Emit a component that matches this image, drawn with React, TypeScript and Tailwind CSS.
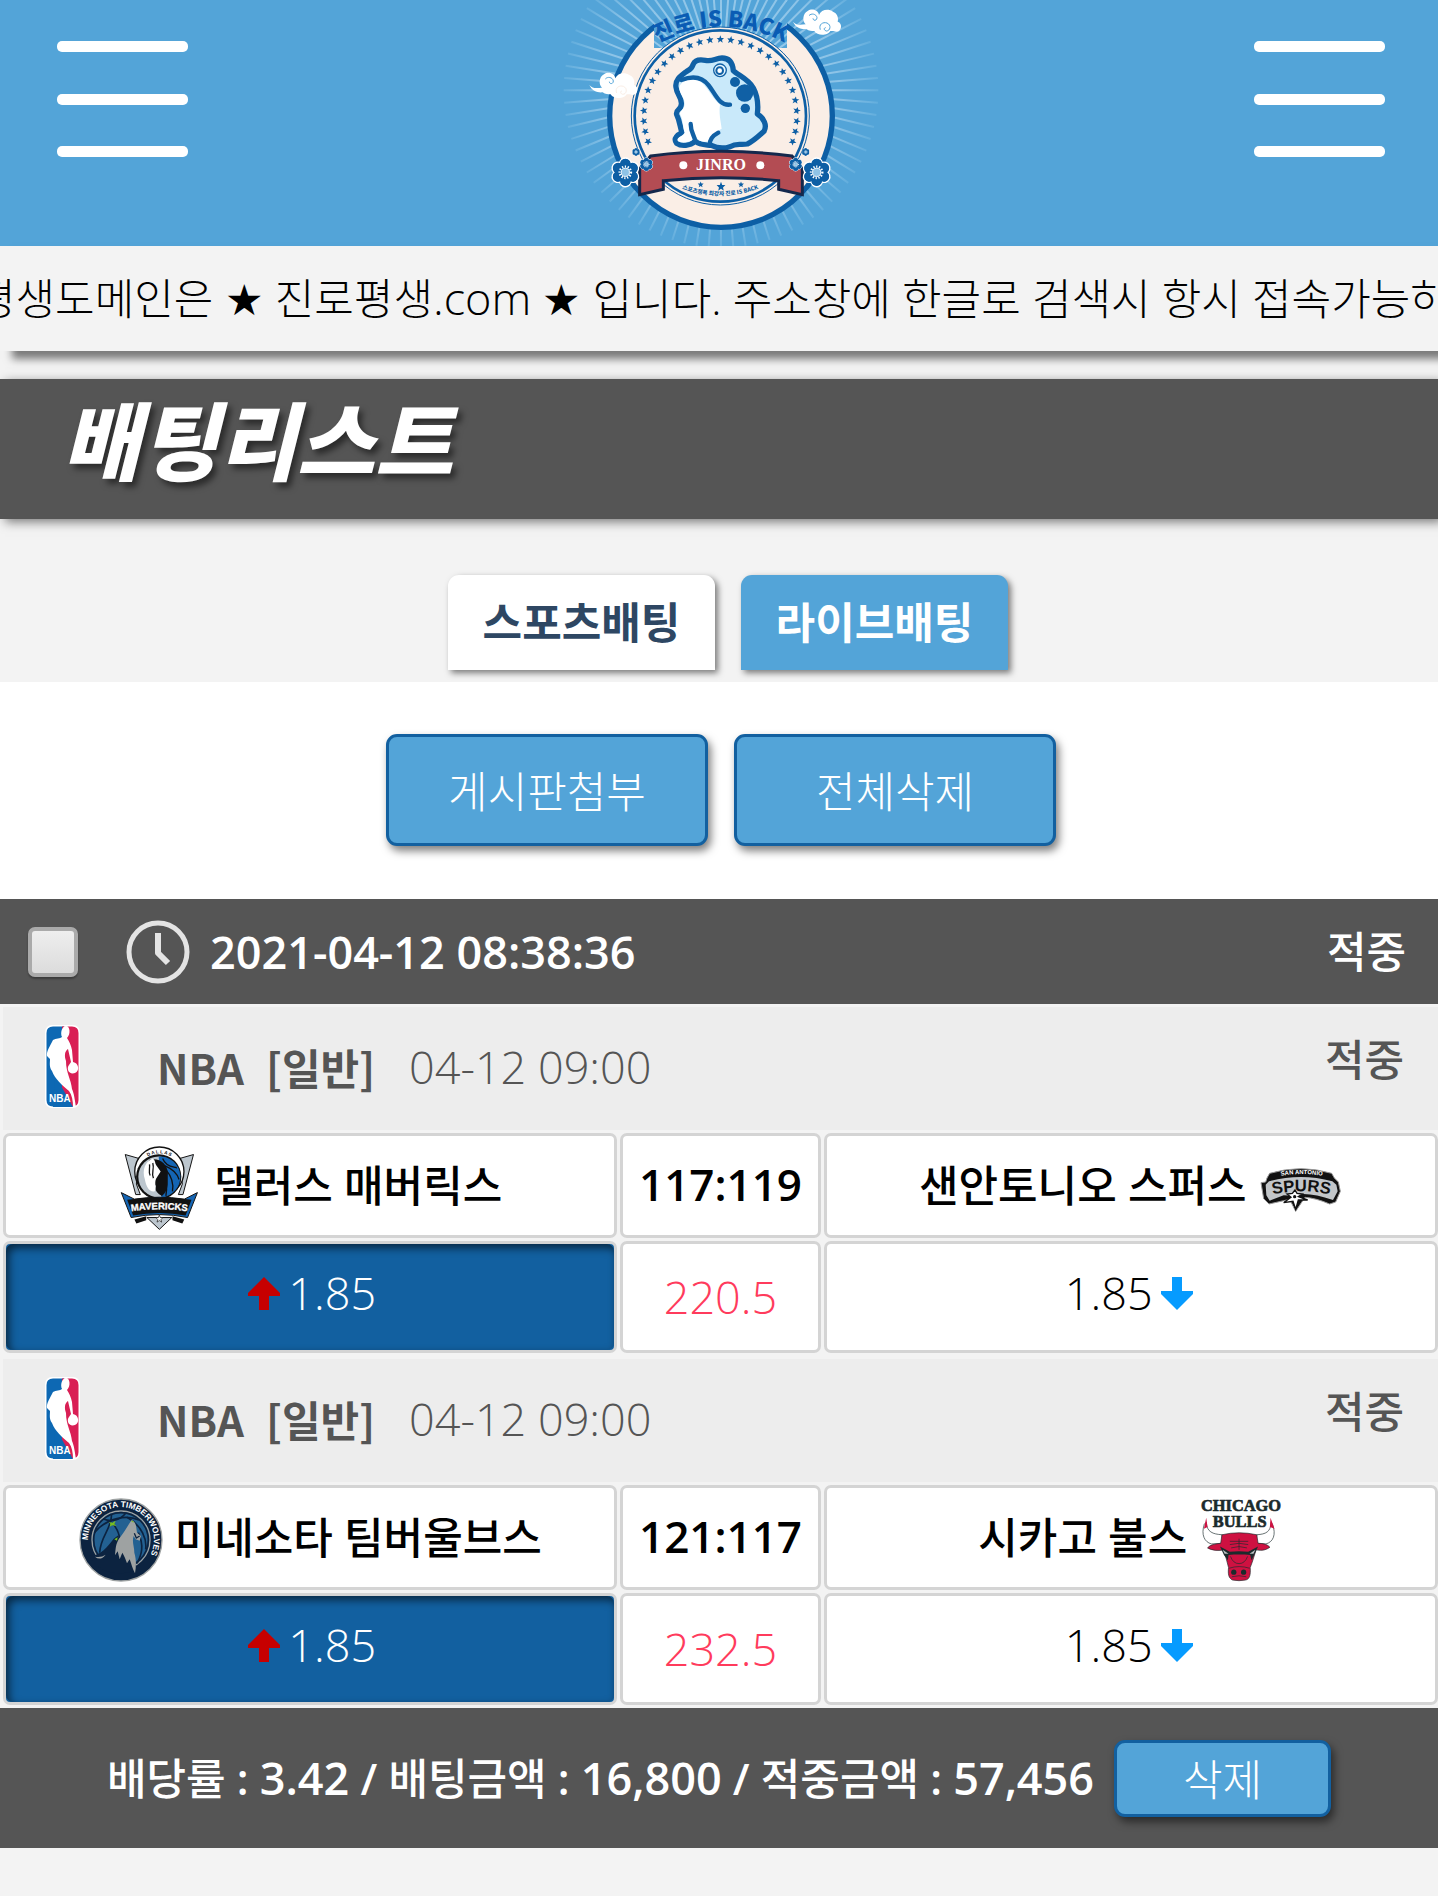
import type { ReactNode } from 'react';
import clsx from 'clsx';

interface Team {
  name: string;
  logo: ReactNode;
}

interface Match {
  id: number;
  league: string;
  type: string;
  time: string;
  status: string;
  home: Team;
  away: Team;
  score: string;
  homeOdds: string;
  line: string;
  awayOdds: string;
}

const STAR = 'M0 -12 L3 -4 L11 -4 L5 2 L7 10 L0 5 L-7 10 L-5 2 L-11 -4 L-3 -4 Z';
const RAYS = Array.from({ length: 80 }, (_, i) => i * 4.5);
const RING_STARS = Array.from({ length: 29 }, (_, i) => (i - 14) * 7.82);
const PETALS = [0, 60, 120, 180, 240, 300];

function Rays() {
  return (
    <g stroke="url(#ray)" strokeWidth="6">
      {RAYS.map((a) => (
        <line key={a} x1="543" y1="271" x2="1015" y2="271.1" transform={`rotate(${a} 543 271)`} />
      ))}
    </g>
  );
}

function Flower({ x, y, size }: { x: number; y: number; size: number }) {
  return (
    <g transform={`translate(${x} ${y}) scale(${size})`}>
      {PETALS.map((a) => (
        <circle key={a} cy="-27" r="18" fill="#0d5fa5" stroke="#fff" strokeWidth="5" transform={`rotate(${a})`} />
      ))}
      {PETALS.map((a) => (
        <circle key={a} cy="-26" r="17" fill="#0d5fa5" transform={`rotate(${a})`} />
      ))}
      <circle r="24" fill="#0d5fa5" />
      <circle r="18" fill="none" stroke="#fff" strokeWidth="7" strokeDasharray="4 5" />
      <circle r="13" fill="#8fc3e6" stroke="#fff" strokeWidth="3" />
    </g>
  );
}

function Cloud({ x, y, swirl }: { x: number; y: number; swirl: string }) {
  return (
    <g transform={`translate(${x} ${y})`}>
      <path
        d="M0 38 C12 52 26 46 38 46 C28 38 28 14 44 6 C58 -4 76 4 78 18 C84 2 106 -2 120 8 C132 12 138 26 134 38 C150 42 146 68 130 68 C122 66 118 66 112 66 C106 80 72 82 64 66 C56 66 48 66 40 60 C26 62 8 56 0 38 Z"
        fill="#fff"
      />
      <path d="M48 20 C54 12 70 14 72 26 C72 36 60 36 60 28" fill="none" stroke="#53a4d8" strokeWidth="3" />
      <path d="M82 62 C76 46 90 38 102 42 C116 48 112 66 100 66 C92 64 92 56 98 56" fill="none" stroke={swirl} strokeWidth="3" />
    </g>
  );
}

function BrandLogo() {
  return (
    <svg viewBox="3 0 1080 738" className="h-[246px] w-[360px]" role="img" aria-label="진로 IS BACK">
      <defs>
        <radialGradient id="ray" gradientUnits="userSpaceOnUse" cx="543" cy="271" r="472">
          <stop offset="0" stopColor="#a5d0ec" />
          <stop offset="0.75" stopColor="#8cc3e7" />
          <stop offset="1" stopColor="#63aedd" />
        </radialGradient>
        <path id="top-arc" d="M356 126 Q543 34 730 126" />
        <path id="bottom-arc" d="M410 560 Q540 614 672 560" />
        <clipPath id="plate">
          <rect x="342" y="0" width="399" height="144" />
        </clipPath>
      </defs>
      <Rays />
      <circle cx="543" cy="348" r="334" fill="#faeee6" stroke="#0d5fa5" strokeWidth="16" />
      <g clipPath="url(#plate)">
        <rect x="342" y="0" width="399" height="144" fill="#53a4d8" />
        <Rays />
      </g>
      <circle cx="541" cy="348" r="267" fill="#faeee6" stroke="#0d5fa5" strokeWidth="3" />
      <circle cx="541" cy="348" r="257" fill="none" stroke="#0d5fa5" strokeWidth="8" />
      <text className="font-['Noto_Sans_CJK_KR',sans-serif] text-[66px] font-black" fill="#0a5cb4">
        <textPath href="#top-arc" startOffset="50%" textAnchor="middle">진로 IS BACK</textPath>
      </text>
      {RING_STARS.map((a) => (
        <path key={a} d={STAR} fill="#0d5fa5" transform={`rotate(${a} 541 348) translate(541 118)`} />
      ))}

      {/* toad */}
      <path
        d="M460 192 C466 178 480 178 496 181 C518 186 526 174 546 174 C568 174 578 190 580 212 C594 226 624 236 640 264 C654 290 655 318 652 342 C672 354 682 376 672 394 C654 410 640 424 622 432 C600 436 590 428 570 440 C552 446 530 444 514 436 C494 434 480 436 466 424 C450 438 424 440 410 430 C398 414 414 404 426 398 C420 382 420 364 410 344 C406 326 424 332 424 312 C426 292 410 284 408 262 C404 238 424 226 440 214 C454 206 456 202 460 192 Z"
        fill="#c9e9fa"
        stroke="#1060a5"
        strokeWidth="16"
        strokeLinejoin="round"
      />
      <path
        d="M418 262 C424 236 466 232 486 248 C508 270 520 298 540 314 C536 340 542 360 545 386 C526 396 510 410 506 424 C490 428 476 424 468 410 C458 424 432 432 414 424 C406 412 428 410 434 398 C428 380 430 360 420 342 C418 334 434 328 434 312 C434 292 418 284 418 262 Z"
        fill="#fff"
      />
      <g fill="none" stroke="#1060a5" strokeWidth="13" strokeLinecap="round">
        <path d="M424 240 C460 226 486 230 506 256 C528 284 538 318 570 314" />
        <path d="M452 372 C452 396 462 404 466 424" />
        <path d="M535 398 C520 406 508 416 510 434" />
      </g>
      <circle cx="540" cy="211" r="19" fill="#e6f5fd" stroke="#1060a5" strokeWidth="4" />
      <circle cx="539" cy="212" r="10" fill="#fff" stroke="#1060a5" strokeWidth="6" />
      <circle cx="585" cy="246" r="15" fill="#1060a5" />
      <circle cx="614" cy="279" r="26" fill="#1060a5" />
      <circle cx="616" cy="325" r="14" fill="#1060a5" />

      {/* ribbon */}
      <path
        d="M299 506 L332 468 Q543 440 756 468 L787 506 V584 L716 568 V542 Q543 524 370 542 V568 L299 584 Z"
        fill="#b34c53"
        stroke="#14284c"
        strokeWidth="9"
      />
      <text x="543" y="511" textAnchor="middle" className="font-['Liberation_Serif',serif] text-[48px] font-bold" fill="#fff">
        JINRO
      </text>
      <circle cx="430" cy="496" r="12" fill="#fff" />
      <circle cx="661" cy="496" r="12" fill="#fff" />
      <path d={STAR} fill="#0d5fa5" transform="translate(482 554) scale(.8)" />
      <path d={STAR} fill="#0d5fa5" transform="translate(543 560) scale(1.2)" />
      <path d={STAR} fill="#0d5fa5" transform="translate(603 554) scale(.8)" />
      <text className="font-['Noto_Sans_CJK_KR',sans-serif] text-[17px] font-black" fill="#0d5fa5">
        <textPath href="#bottom-arc" startOffset="50%" textAnchor="middle">스포츠정복 최강자 진로 IS BACK</textPath>
      </text>

      <Flower x={288} y={456} size={0.26} />
      <Flower x={797} y={456} size={0.26} />
      <Flower x={256} y={517} size={0.95} />
      <Flower x={830} y={517} size={0.95} />
      <Flower x={319} y={493} size={0.45} />
      <Flower x={767} y={493} size={0.45} />
      <Cloud x={759} y={27} swirl="#53a4d8" />
      <Cloud x={148} y={217} swirl="#faeee6" />
    </svg>
  );
}

function MenuButton({ label }: { label: string }) {
  return (
    <button type="button" aria-label={label} className="mt-10">
      <svg viewBox="0 0 131 118" className="h-[118px] w-[131px]" fill="#fff">
        <rect y="1" width="131" height="11" rx="5" />
        <rect y="54" width="131" height="11" rx="5" />
        <rect y="106" width="131" height="11" rx="5" />
      </svg>
    </button>
  );
}

function ClockIcon() {
  return (
    <svg viewBox="0 0 64 64" className="size-16" fill="none" stroke="#e4e4e4">
      <circle cx="32" cy="32" r="29" strokeWidth="5" />
      <path d="M32 13 V33 L42 43" strokeWidth="6" strokeLinejoin="round" />
    </svg>
  );
}

function NbaLogo() {
  return (
    <svg viewBox="0 0 35 83" className="h-[83px] w-[35px]" role="img" aria-label="NBA">
      <rect width="35" height="83" rx="7" fill="#fff" />
      <path d="M8 1.500 H19 V81.500 H8 Q1.500 81.500 1.500 75 V8 Q1.500 1.500 8 1.500 Z" fill="#0d68b3" />
      <path d="M17 1.500 H27 Q33.500 1.500 33.500 8 V75 Q33.500 81.500 27 81.500 H17 Z" fill="#d91f55" />
      <path d="M10 50 L28 82 H8 Z" fill="#0d68b3" />
      <path
        d="M17 12 C15 8 17 1 21 1 C25 1 26 9 22 13 C24 16 26 20 27 25 L28 37 C34 38 35 46 30 48 C24 50 21 44 24 40 L26 37 L23 24 C20 26 19 30 21 36 C21 48 26 54 27 64 C29 68 30 76 31 82 H28 C28 76 27 70 24 66 C17 60 10 54 7 46 C4 42 5 38 5 34 L2 31 C1 27 5 21 8 15 C11 13 15 14 17 12 Z"
        fill="#fff"
      />
      <text x="4" y="77" className="font-['Liberation_Sans_Narrow','Liberation_Sans',sans-serif] text-[10px] font-bold" fill="#fff">
        NBA
      </text>
    </svg>
  );
}

function MavericksLogo() {
  return (
    <svg viewBox="26 14 256 256" className="size-21" role="img" aria-label="Dallas Mavericks">
      <path d="M48 40 L90 52 L82 130 L94 162 L80 162 Z" fill="#bcc6ce" stroke="#111" strokeWidth="3" />
      <path d="M256 40 L214 52 L222 130 L210 162 L224 162 Z" fill="#bcc6ce" stroke="#111" strokeWidth="3" />
      <path d="M114 232 L190 232 L152 268 Z" fill="#bcc6ce" stroke="#111" strokeWidth="3" />
      <circle cx="152" cy="92" r="75" fill="#fff" stroke="#111" strokeWidth="4" />
      <circle cx="150" cy="108" r="69" fill="#111" />
      <circle cx="150" cy="108" r="62" fill="#bcc6ce" />
      <path d="M150 46 A62 62 0 0 1 158 170 Z" fill="#1465b4" />
      <g fill="none" stroke="#111" strokeWidth="4">
        <path d="M162 52 C176 86 206 74 204 82" />
        <path d="M168 74 C196 86 208 102 212 116" />
        <path d="M172 86 C192 110 196 130 192 152" />
        <path d="M168 96 C176 120 176 140 172 166" />
      </g>
      <path d="M122 56 C150 48 176 66 178 96 C176 120 184 146 160 166 C146 158 136 148 142 134 C120 138 98 100 122 56 Z" fill="#111" />
      <path d="M132 52 C110 60 98 86 108 116 C112 138 122 156 138 152 C144 138 136 128 142 114 L156 92 L142 72 C138 64 140 58 132 52 Z" fill="#fff" />
      <path d="M122 70 C124 82 118 94 124 104 M132 66 C138 86 126 96 134 112" fill="none" stroke="#111" strokeWidth="4" />
      <path d="M76 238 L112 228 L112 240 L82 250 Z M228 238 L192 228 L192 240 L222 250 Z" fill="#111" />
      <path d="M36 156 L76 176 Q152 164 228 176 L268 156 L238 232 Q152 214 66 232 Z" fill="#1465b4" stroke="#111" strokeWidth="3" />
      <path d="M54 178 Q152 164 250 178 L232 226 Q152 210 72 226 Z" fill="#111" />
      <path id="mavs" d="M62 214 Q152 200 242 214" fill="none" />
      <text className="font-['Liberation_Sans_Narrow','Liberation_Sans',sans-serif] text-[29px] font-bold" fill="#fff" stroke="#fff" strokeWidth="1">
        <textPath href="#mavs" startOffset="50%" textAnchor="middle">MAVERICKS</textPath>
      </text>
      <path id="dallas" d="M92 66 Q152 6 212 66" fill="none" />
      <text className="font-['Liberation_Sans',sans-serif] text-[14px] font-bold" fill="#111">
        <textPath href="#dallas" startOffset="50%" textAnchor="middle">D A L L A S</textPath>
      </text>
      <path d={STAR} fill="#fff" stroke="#111" strokeWidth="2" transform="translate(152 236)" />
    </svg>
  );
}

function SpursLogo() {
  return (
    <svg viewBox="30 16 252 252" className="size-21" role="img" aria-label="San Antonio Spurs">
      <path
        d="M54 112 L62 98 Q156 70 248 98 L256 112 L268 124 L274 152 L260 184 L242 190 Q200 172 168 170 L140 212 L122 176 L104 180 L60 190 L44 174 L36 126 L50 124 Z"
        fill="#111"
        stroke="#999"
        strokeWidth="3"
      />
      <path d="M50 132 L60 122 Q156 96 250 122 L262 132 L266 152 L252 178 Q196 158 156 160 L144 166 L104 164 L62 180 L52 164 Z" fill="#c2c6c9" />
      <path id="san" d="M66 112 Q156 88 250 112" fill="none" />
      <text className="font-['Liberation_Sans',sans-serif] text-[18px] font-bold" fill="#fff">
        <textPath href="#san" startOffset="50%" textAnchor="middle">SAN ANTONIO</textPath>
      </text>
      <path id="spurs" d="M60 164 Q156 140 254 164" fill="none" />
      <text className="font-['Liberation_Sans',sans-serif] text-[50px] font-bold" fill="#111">
        <textPath href="#spurs" startOffset="50%" textAnchor="middle">SPURS</textPath>
      </text>
      <path d="M138 148 L144 158 L160 160 L148 168 L176 178 L148 178 L140 206 L132 182 L104 186 L126 170 L114 160 L130 158 Z" fill="#fff" stroke="#111" strokeWidth="4" />
      <circle cx="137" cy="168" r="5" fill="#111" />
    </svg>
  );
}

function TimberwolvesLogo() {
  return (
    <svg viewBox="26 26 252 252" className="size-21" role="img" aria-label="Minnesota Timberwolves">
      <circle cx="152" cy="152" r="123" fill="#0c2340" stroke="#9ea2a2" strokeWidth="4" />
      <circle cx="152" cy="152" r="87" fill="#236192" stroke="#9ea2a2" strokeWidth="4" />
      <g fill="none" stroke="#0c2340" strokeWidth="5">
        <circle cx="152" cy="152" r="82" />
        <path d="M72 130 C110 84 170 76 206 92" />
        <path d="M98 88 C124 100 150 92 166 72" />
        <path d="M124 74 C124 120 90 140 88 190" />
        <path d="M126 100 C150 130 150 150 146 170" />
        <path d="M170 84 C216 110 230 150 226 180" />
        <path d="M204 130 C222 170 214 196 200 222" />
      </g>
      <path d="M116 98 L126 100 L136 94 L132 104 L138 110 L126 108 L118 112 L120 104 Z" fill="#78be21" />
      <path d="M56 200 C90 200 112 172 130 148 L144 138 L150 170 L190 200 L200 240 C156 262 86 256 56 200 Z" fill="#0c2340" />
      <path
        d="M184 92 C190 94 198 104 198 116 L200 130 L212 140 L208 154 L196 150 L190 140 C184 156 192 172 192 190 C198 210 198 230 194 252 C186 238 184 226 178 210 L170 222 C166 210 162 200 156 190 L148 210 L142 186 L134 198 C136 178 136 164 146 148 C160 132 170 112 184 92 Z"
        fill="#9ea2a2"
      />
      <path d="M192 132 L198 146 L208 140" fill="none" stroke="#0c2340" strokeWidth="4" />
      <path d="M132 150 L142 144 L140 154 Z M182 96 L188 94 L190 100 Z" fill="#78be21" />
      <path d="M74 202 Q92 206 106 196 Q90 216 74 202 Z" fill="#9ea2a2" />
      <path id="wolves" d="M58 184 A99 99 0 1 1 222 222" fill="none" />
      <text className="font-['Liberation_Sans',sans-serif] text-[25px] font-bold" fill="#fff">
        <textPath href="#wolves" startOffset="50%" textAnchor="middle">MINNESOTA TIMBERWOLVES</textPath>
      </text>
    </svg>
  );
}

function BullsLogo() {
  return (
    <svg viewBox="28 56 256 256" className="size-21" role="img" aria-label="Chicago Bulls">
      <g textAnchor="middle" fill="#1c2a2c" stroke="#1c2a2c" strokeWidth="2" className="font-['Liberation_Serif',serif] text-[50px] font-bold">
        <text x="156" y="95">CHICAGO</text>
        <text x="152" y="145">BULLS</text>
      </g>
      <path d="M44 136 C34 168 44 190 66 196 L100 194 L98 168 C70 166 52 160 50 130 Z" fill="#fff" stroke="#1c2a2c" strokeWidth="2" />
      <path d="M252 136 C264 168 254 190 232 196 L202 194 L204 168 C232 166 246 160 248 130 Z" fill="#fff" stroke="#1c2a2c" strokeWidth="2" />
      <path d="M50 116 L54 144 L43 150 Z M246 116 L258 150 L244 144 Z" fill="#ce1141" />
      <path d="M98 168 Q150 156 204 168 L208 194 C224 194 238 198 244 206 C228 218 212 216 202 214 L190 252 L184 268 C186 290 182 304 170 306 Q150 310 130 306 C118 300 116 288 118 268 L104 214 C90 218 66 216 54 208 C62 198 78 196 94 194 Z" fill="#ce1141" stroke="#1c2a2c" strokeWidth="2" />
      <path d="M92 204 L122 220 L150 218 L178 220 L208 204 L196 230 L188 246 L184 230 L168 228 L134 228 L118 230 L116 246 L104 230 Z" fill="#1c2a2c" />
      <path d="M100 214 L118 226 L106 226 Z M200 214 L182 226 L194 226 Z" fill="#b8bec0" />
      <path d="M122 188 H178 M122 198 Q150 190 178 198 M126 208 Q150 200 174 208 M150 180 V214 M124 234 Q132 256 150 256 Q168 256 176 234 M120 270 Q150 260 182 270 M128 296 Q150 290 172 296" fill="none" stroke="#1c2a2c" strokeWidth="2" />
      <circle cx="134" cy="282" r="8" fill="#1c2a2c" />
      <circle cx="164" cy="282" r="8" fill="#1c2a2c" />
    </svg>
  );
}

const matches: Match[] = [
  {
    id: 1,
    league: 'NBA',
    type: '일반',
    time: '04-12 09:00',
    status: '적중',
    home: { name: '댈러스 매버릭스', logo: <MavericksLogo /> },
    away: { name: '샌안토니오 스퍼스', logo: <SpursLogo /> },
    score: '117:119',
    homeOdds: '1.85',
    line: '220.5',
    awayOdds: '1.85',
  },
  {
    id: 2,
    league: 'NBA',
    type: '일반',
    time: '04-12 09:00',
    status: '적중',
    home: { name: '미네소타 팀버울브스', logo: <TimberwolvesLogo /> },
    away: { name: '시카고 불스', logo: <BullsLogo /> },
    score: '121:117',
    homeOdds: '1.85',
    line: '232.5',
    awayOdds: '1.85',
  },
];

const NUM = 'text-[45px]';
const KR = "font-['Noto_Sans_CJK_KR',sans-serif] text-[42px] font-bold";
const CELL = 'rounded-[7px] border-[3px] border-[#d4d4d4] text-center';
const ACTION =
  'rounded-[11px] border-[3px] border-[#1260a0] bg-[#53a4d8] pt-1 font-light text-white shadow-[3px_5px_8px_rgba(0,0,0,0.5)]';

function MatchTable({ match }: { match: Match }) {
  return (
    <div className="overflow-hidden">
      <table className="w-[calc(100%+3px)] table-fixed border-separate border-spacing-[3px]">
        <colgroup>
          <col className="w-[43%]" />
          <col className="w-[14%]" />
          <col className="w-[43%]" />
        </colgroup>
        <tbody>
          <tr className="h-[123px]">
            <th colSpan={3} className="bg-[#ededed] pr-[34px] pb-1 pl-[42px] text-left font-normal text-[#555]">
              <div className="flex items-center">
                <NbaLogo />
                <span className={clsx(KR, 'ml-[77px]')}>{match.league}</span>
                <span className={clsx(KR, 'ml-[22px]')}>[{match.type}]</span>
                <span className={clsx(NUM, 'ml-[34px] font-light')}>{match.time}</span>
                <span className="mb-3.5 ml-auto font-medium">{match.status}</span>
              </div>
            </th>
          </tr>
          <tr className="h-[105px] font-medium">
            <td className={clsx(CELL, 'bg-white pt-1')}>
              <div className="flex items-center justify-center gap-3">
                {match.home.logo}
                <span className="pb-1">{match.home.name}</span>
              </div>
            </td>
            <td className={clsx(CELL, 'bg-white pb-1 text-[44px] font-semibold')}>{match.score}</td>
            <td className={clsx(CELL, 'bg-white pt-1')}>
              <div className="flex items-center justify-center gap-3">
                <span className="pb-1">{match.away.name}</span>
                {match.away.logo}
              </div>
            </td>
          </tr>
          <tr className="h-28 font-light">
            <td className={clsx(CELL, NUM, 'bg-[#1260a0] pb-2 pl-1 text-white shadow-[inset_3px_4px_8px_rgba(0,0,0,0.6)]')}>
              <div className="flex items-center justify-center gap-2">
                <svg viewBox="0 0 32 33" className="h-[33px] w-8" fill="#c70000">
                  <path d="M16 0 L32 16 V19 H21 V33 H11 V19 H0 V16 Z" />
                </svg>
                {match.homeOdds}
              </div>
            </td>
            <td className={clsx(CELL, NUM, 'bg-white text-[#ff3b5c]')}>{match.line}</td>
            <td className={clsx(CELL, NUM, 'bg-white pr-1 pb-2')}>
              <div className="flex items-center justify-center gap-2">
                {match.awayOdds}
                <svg viewBox="0 0 32 33" className="h-[33px] w-8" fill="#069bff">
                  <path d="M16 33 L32 17 V14 H21 V0 H11 V14 H0 V17 Z" />
                </svg>
              </div>
            </td>
          </tr>
        </tbody>
      </table>
    </div>
  );
}

export default function App() {
  return (
    <div className="min-h-screen bg-[#f3f3f3] font-['Open_Sans','Noto_Sans_CJK_KR',sans-serif] text-[43px] leading-[60px] text-black">
      <header className="flex items-start justify-between bg-[#53a4d8] pr-[53px] pl-[57px]">
        <MenuButton label="메뉴" />
        <BrandLogo />
        <MenuButton label="내 정보" />
      </header>

      <div className="bg-[#f3f3f3] shadow-[12px_8px_8px_rgba(0,0,0,0.5)]">
        <div className="h-[105px] overflow-hidden">
          <p className="-ml-6 leading-[104px] font-light whitespace-nowrap">
            평생도메인은 <span className="font-['DejaVu_Sans',sans-serif]">★</span> 진로평생
            <span className={NUM}>.com</span> <span className="font-['DejaVu_Sans',sans-serif]">★</span> 입니다.
            주소창에 한글로 검색시 항시 접속가능하
          </p>
        </div>
      </div>

      <h1 className="mt-7 bg-[#555] pb-4 pl-[62px] text-[85px] leading-[124px] font-black text-white italic shadow-[5px_3px_10px_rgba(0,0,0,0.5)] text-shadow-[4px_5px_6px_rgba(0,0,0,0.5)]">
        배팅리스트
      </h1>

      <nav className="flex justify-center gap-[26px] pt-14 pb-3 pl-[18px]">
        <button
          type="button"
          className="h-[95px] w-[267px] rounded-t-[11px] bg-white font-bold text-[#2e4763] shadow-[3px_3px_6px_rgba(0,0,0,0.5)]"
        >
          스포츠배팅
        </button>
        <button
          type="button"
          className="h-[95px] w-[267px] rounded-t-[11px] bg-[#53a4d8] font-bold text-white shadow-[3px_3px_6px_rgba(0,0,0,0.5)]"
        >
          라이브배팅
        </button>
      </nav>

      <main>
        <div className="flex justify-center gap-[26px] bg-white pt-[52px] pb-[53px] pl-1">
          <button type="button" className={clsx(ACTION, 'h-28 w-[322px]')}>게시판첨부</button>
          <button type="button" className={clsx(ACTION, 'h-28 w-[322px]')}>전체삭제</button>
        </div>

        <section>
          <div className="flex h-[105px] items-center bg-[#555] pr-8 pl-7 font-medium text-white">
            <input
              id="bet-1"
              type="checkbox"
              className="h-[50px] w-[50px] appearance-none rounded-[7px] border-4 border-[#aaa] bg-linear-to-b from-[#eee] to-[#dcdcdc] shadow-[0_2px_2px_rgba(0,0,0,0.3)]"
            />
            <label htmlFor="bet-1" className={clsx(NUM, 'ml-12 flex items-center gap-5 font-semibold')}>
              <ClockIcon />
              2021-04-12 08:38:36
            </label>
            <span className="ml-auto">적중</span>
          </div>

          {matches.map((match) => (
            <MatchTable key={match.id} match={match} />
          ))}

          <div className="flex h-[140px] items-center justify-center gap-5 bg-[#555] text-white">
            <p className="font-semibold">
              <span className="font-medium">배당률</span> : <span className={NUM}>3.42</span> /{' '}
              <span className="font-medium">배팅금액</span> : <span className={NUM}>16,800</span> /{' '}
              <span className="font-medium">적중금액</span> : <span className={NUM}>57,456</span>
            </p>
            <button type="button" className={clsx(ACTION, 'h-[77px] w-[217px]')}>삭제</button>
          </div>
        </section>
      </main>
    </div>
  );
}
